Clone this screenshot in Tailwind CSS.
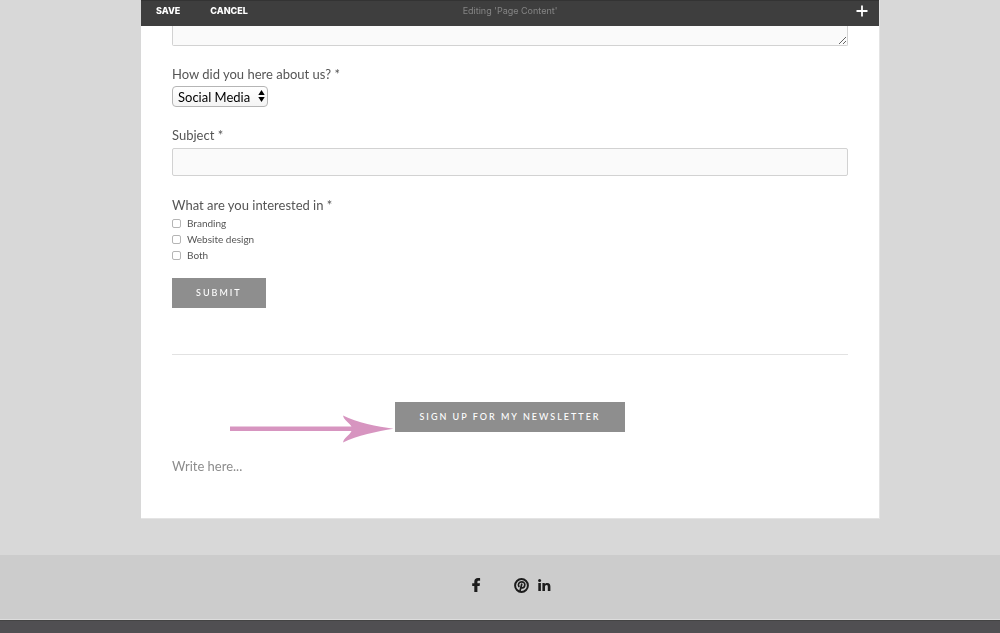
<!DOCTYPE html>
<html lang="en">
<head>
<meta charset="utf-8">
<meta name="viewport" content="width=device-width, initial-scale=1">
<title>Editing 'Page Content'</title>
<script src="https://cdn.jsdelivr.net/npm/@tailwindcss/browser@4"></script>
</head>
<body class="flex min-h-screen flex-col bg-[#d8d8d8] font-['Lato',sans-serif] text-[13px] text-[#555]">
<main class="mr-[120px] ml-[141px] border-r border-b border-[#e4e4e4] bg-white">
  <header class="grid h-[26px] grid-cols-3 items-start border-t border-[#333] bg-[#3e3e3e] px-[15px] pt-0.5 font-['Inter',sans-serif] text-[9px] leading-4">
    <div class="flex gap-[30px] font-extrabold text-white">
      <button type="button">SAVE</button>
      <button type="button">CANCEL</button>
    </div>
    <p class="text-center text-[#858585]">Editing 'Page Content'</p>
    <button type="button" aria-label="Add" class="mt-0.5 -mr-1 justify-self-end">
      <svg class="size-3" viewBox="0 0 12 12" fill="none" stroke="#fff" stroke-width="1.8"><path d="M6 .5v11M.5 6h11"/></svg>
    </button>
  </header>

  <form class="px-[31px]">
    <textarea aria-label="Message" class="block h-5 min-h-0 w-full resize rounded-b-xs border border-t-0 border-[#d2d2d2] bg-[#fafafa]"></textarea>

    <label for="source" class="mt-[18px] block leading-5">How did you here about us? *</label>
    <div class="relative mt-0.5 w-24">
      <select id="source" class="block h-[21px] w-full appearance-none rounded border border-[#b5b5b5] bg-linear-to-b from-white to-[#f4f4f4] pl-[5px] leading-[18px] text-black">
        <option>Social Media</option>
      </select>
      <svg class="pointer-events-none absolute top-1 right-[3px] h-3 w-[7px]" viewBox="0 0 7 12" fill="#000"><path d="M3.5 0 6.7 5H.3zM3.500 12l3.200-5H.3z"/></svg>
    </div>

    <label for="subject" class="mt-[18px] block leading-5">Subject *</label>
    <input id="subject" type="text" class="mt-[3px] block h-7 w-full rounded-xs border border-[#d2d2d2] bg-[#fafafa] px-2">

    <fieldset class="mt-[19px]">
      <legend class="leading-5">What are you interested in *</legend>
      <label class="flex h-4 items-center gap-1.5 text-[10px]"><input type="checkbox" class="size-[9px] appearance-none rounded-xs border border-[#b5b5b5] bg-white checked:bg-[#888]">Branding</label>
      <label class="flex h-4 items-center gap-1.5 text-[10px]"><input type="checkbox" class="size-[9px] appearance-none rounded-xs border border-[#b5b5b5] bg-white checked:bg-[#888]">Website design</label>
      <label class="flex h-4 items-center gap-1.5 text-[10px]"><input type="checkbox" class="size-[9px] appearance-none rounded-xs border border-[#b5b5b5] bg-white checked:bg-[#888]">Both</label>
    </fieldset>

    <button type="submit" class="mt-[15px] block h-[30px] bg-[#8e8e8e] px-6 text-[9px] font-medium tracking-[2px] text-white">SUBMIT</button>
  </form>

  <hr class="mx-[31px] mt-[46px] border-[#e2e2e2]">

  <section class="px-[31px] pb-[42px]">
    <div class="relative mt-[47px] flex justify-center">
      <svg class="absolute top-3 right-[calc(50%+116px)] h-[30px] w-[164px]" viewBox="0 0 164 30" fill="#d795c0"><path d="M0 12.600H121.500C119 8 114 6.500 113 1.500 127 8.500 147 12.500 163.500 14.800 147 17.500 127 21.500 113 28.500 114 23.500 119 22 121.500 17H0z"/></svg>
      <a href="#newsletter" class="flex h-[30px] items-center bg-[#8e8e8e] px-6 text-[9px] font-medium tracking-[2px] text-white">SIGN UP FOR MY NEWSLETTER</a>
    </div>
    <p class="mt-6 leading-5 text-[#8c8c8c]">Write here...</p>
  </section>
</main>

<footer class="mt-9 flex h-[65px] justify-center border-b border-[#ddd] bg-[#ccc] pt-[22px] pl-[22px] text-[#1c1c1c]">
  <nav aria-label="Social" class="flex h-4 items-center">
    <a href="#facebook" aria-label="Facebook" class="mr-[33px]"><svg class="h-[14px] w-[9px]" viewBox="0 0 9 14" fill="currentColor"><path d="M2.300 14V8H.2V5.200h2.100V3.800C2.300 1.400 3.700.1 5.900.1c1 0 1.900.1 2.200.1v2.500H6.800C5.700 2.700 5.400 3.200 5.400 4v1.200h2.600L7.600 8H5.400v6z"/></svg></a>
    <a href="#pinterest" aria-label="Pinterest" class="mr-[9px]"><svg class="size-[15px]" viewBox="0 0 15 15" fill="none" stroke="currentColor" stroke-linecap="round"><circle cx="7.500" cy="7.500" r="6.400" stroke-width="2"/><path d="M4.900 8.500C3.600 6.300 5 3.900 7.700 3.900c2 0 3.200 1.300 3.100 2.900-.1 1.900-1.200 3.100-2.500 3.100-.7 0-1.200-.3-1.400-.8M7.700 6.200 6 13" stroke-width="1.700"/></svg></a>
    <a href="#linkedin" aria-label="LinkedIn"><svg class="h-3 w-[13px]" viewBox="0 0 13 12" fill="currentColor"><circle cx="1.600" cy="1.600" r="1.500"/><path d="M.3 4.100h2.600V12H.3zM4.400 4.100h2.400v1.100C7.200 4.400 8.100 3.900 9.200 3.900c2.500 0 3.200 1.500 3.200 3.700V12H9.800V8c0-1.100-.1-2-1.300-2S7 7 7 8v4H4.400z"/></svg></a>
  </nav>
</footer>
<div class="min-h-3 grow border-t border-[#444] bg-[#504f52]"></div>
</body>
</html>
